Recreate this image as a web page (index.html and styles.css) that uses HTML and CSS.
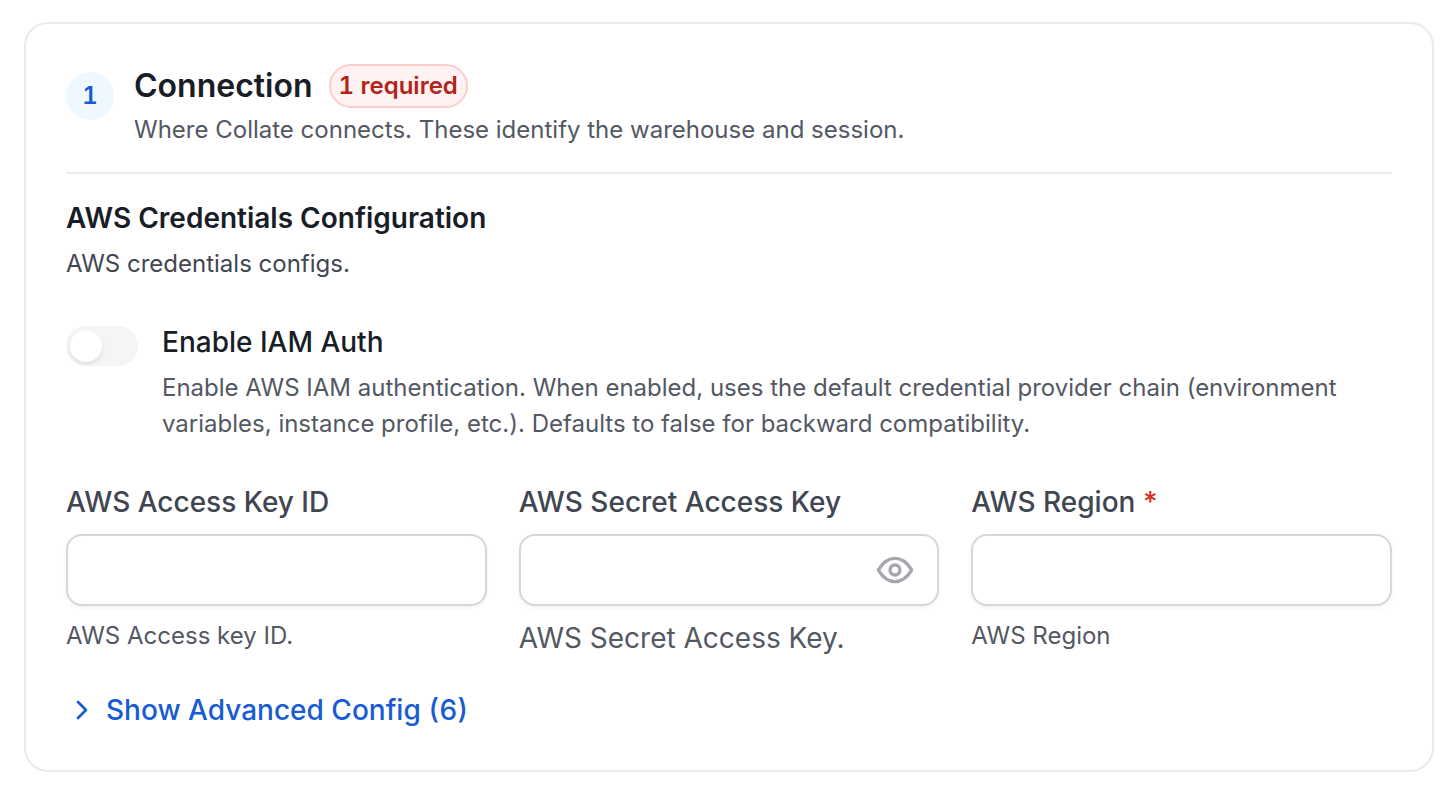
FILE: index.html
```html
<!DOCTYPE html>
<html lang="en">
<head>
    <meta charset="UTF-8">
    <title>Connection</title>
    <link rel="stylesheet" href="styles.css">
</head>
<body>
    <section class="card">
        <header class="card-header">
            <span class="step">1</span>
            <div class="header-text">
                <div class="title-row">
                    <h2>Connection</h2>
                    <span class="badge">1 required</span>
                </div>
                <p class="subtitle">Where Collate connects. These identify the warehouse and session.</p>
            </div>
        </header>

        <form>
            <h3>AWS Credentials Configuration</h3>
            <p class="section-desc">AWS credentials configs.</p>

            <div class="toggle-row">
                <input type="checkbox" id="iamAuth" class="toggle" aria-describedby="iamAuthHint">
                <div class="toggle-text">
                    <label for="iamAuth">Enable IAM Auth</label>
                    <p id="iamAuthHint">Enable AWS IAM authentication. When enabled, uses the default credential provider chain (environment variables, instance profile, etc.). Defaults to false for backward compatibility.</p>
                </div>
            </div>

            <div class="fields">
                <div class="field">
                    <label for="accessKey">AWS Access Key ID</label>
                    <input type="text" id="accessKey" class="control">
                    <p class="hint">AWS Access key ID.</p>
                </div>
                <div class="field">
                    <label for="secretKey">AWS Secret Access Key</label>
                    <div class="control password">
                        <input type="password" id="secretKey">
                        <button type="button" class="eye" aria-label="Show password">
                            <svg width="40" height="40" viewBox="0 0 24 24" fill="none" stroke="currentColor" stroke-width="2" stroke-linecap="round" stroke-linejoin="round">
                                <path d="M2.42 12.713c-.136-.215-.204-.323-.242-.49a1.173 1.173 0 0 1 0-.446c.038-.167.106-.274.242-.49C3.546 9.505 6.895 5 12 5s8.455 4.505 9.58 6.287c.137.215.205.323.243.49.029.125.029.322 0 .446-.038.167-.106.274-.242.49C20.455 14.495 17.105 19 12 19c-5.106 0-8.455-4.505-9.58-6.287z"/>
                                <circle cx="12" cy="12" r="3"/>
                            </svg>
                        </button>
                    </div>
                    <p class="hint hint-large">AWS Secret Access Key.</p>
                </div>
                <div class="field">
                    <label for="region">AWS Region <span class="required">*</span></label>
                    <input type="text" id="region" class="control" required>
                    <p class="hint">AWS Region</p>
                </div>
            </div>

            <button type="button" class="advanced">
                <svg width="32" height="32" viewBox="0 0 24 24" fill="none" stroke="currentColor" stroke-width="2" stroke-linecap="round" stroke-linejoin="round">
                    <path d="M9 18l6-6-6-6"/>
                </svg>
                Show Advanced Config (6)
            </button>
        </form>
    </section>
</body>
</html>
```
FILE: styles.css
```css
* {
    box-sizing: border-box;
}

body {
    margin: 0;
    padding: 22px 20px 16px 24px;
    font-family: Inter, sans-serif;
    font-size: 24px;
    line-height: 36px;
    color: #535862;
    background-color: #fff;
}

h2, h3, p {
    margin: 0;
}

input, button {
    font: inherit;
}

.card {
    padding: 40px;
    border: 2px solid #e9eaeb;
    border-radius: 24px;
}

.card-header {
    display: flex;
    align-items: flex-start;
    gap: 20px;
    padding-bottom: 24px;
    border-bottom: 2px solid #e9eaeb;
}

.step {
    display: flex;
    justify-content: center;
    align-items: center;
    width: 48px;
    height: 48px;
    margin-top: 8px;
    border-radius: 50%;
    font-weight: 600;
    font-variant-numeric: tabular-nums;
    color: #175cd3;
    background-color: #eff8ff;
}

.title-row {
    display: flex;
    align-items: center;
    gap: 16px;
    margin-bottom: 4px;
}

h2 {
    font-size: 32px;
    line-height: 44px;
    font-weight: 600;
    color: #181d27;
}

.badge {
    padding: 2px 8px;
    border: 2px solid #fecdca;
    border-radius: 22px;
    font-weight: 600;
    font-variant-numeric: tabular-nums;
    color: #b42318;
    background-color: #fef3f2;
}

h3 {
    margin-top: 24px;
    font-size: 28px;
    line-height: 40px;
    font-weight: 600;
    color: #181d27;
}

.section-desc {
    margin-top: 8px;
    color: #414651;
}

.toggle-row {
    display: flex;
    align-items: flex-start;
    gap: 24px;
    margin-top: 40px;
}

.toggle {
    flex: none;
    appearance: none;
    width: 72px;
    height: 40px;
    margin: 4px 0 0;
    padding: 4px;
    border-radius: 20px;
    background-color: #f5f5f5;
    cursor: pointer;
}

.toggle::before {
    content: "";
    display: block;
    width: 32px;
    height: 32px;
    border-radius: 50%;
    background-color: #fff;
    box-shadow: 0 2px 4px rgba(10, 13, 18, 0.1);
}

.toggle:checked {
    background-color: #175cd3;
}

.toggle:checked::before {
    margin-left: 32px;
}

.toggle-text label {
    display: block;
    margin-bottom: 8px;
    font-size: 28px;
    line-height: 40px;
    font-weight: 500;
    color: #181d27;
}

.fields {
    display: grid;
    grid-template-columns: repeat(3, minmax(0, 1fr));
    gap: 32px;
    margin-top: 40px;
}

.field label {
    display: block;
    margin-bottom: 12px;
    font-size: 28px;
    line-height: 40px;
    font-weight: 500;
    color: #414651;
}

.required {
    color: #d92d20;
}

.control {
    display: block;
    width: 100%;
    height: 72px;
    padding: 0 24px;
    border: 2px solid #d5d7da;
    border-radius: 16px;
    background-color: #fff;
    box-shadow: 0 2px 4px rgba(10, 13, 18, 0.05);
}

.password {
    display: flex;
    align-items: center;
    padding-right: 22px;
}

.password input {
    flex: 1;
    min-width: 0;
    border: none;
    outline: none;
}

.eye {
    display: flex;
    padding: 0;
    border: none;
    color: #a4a7ae;
    background: none;
    cursor: pointer;
}

.hint {
    margin-top: 12px;
}

.hint-large {
    font-size: 28px;
    line-height: 40px;
}

.advanced {
    display: flex;
    align-items: center;
    gap: 8px;
    margin-top: 32px;
    padding: 0;
    border: none;
    font-size: 28px;
    line-height: 40px;
    font-weight: 500;
    font-variant-numeric: tabular-nums;
    color: #175cd3;
    background: none;
    cursor: pointer;
}
```
